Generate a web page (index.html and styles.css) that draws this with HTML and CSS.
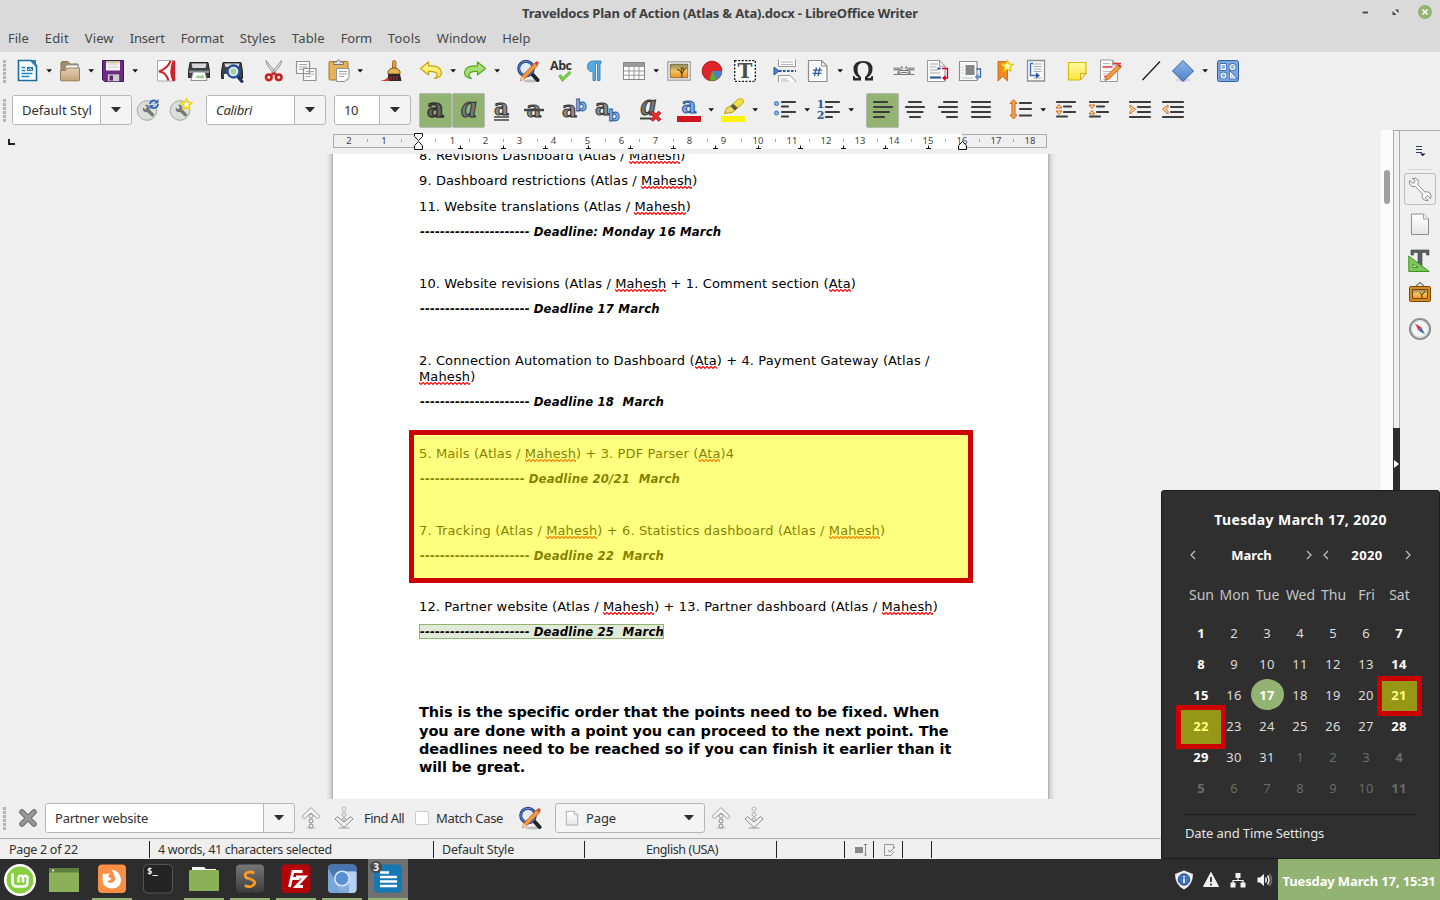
FILE: index.html
```html
<!DOCTYPE html>
<html lang="en">
<head>
<meta charset="utf-8">
<title>Traveldocs Plan of Action (Atlas &amp; Ata).docx - LibreOffice Writer</title>
<link rel="stylesheet" href="styles.css">
</head>
<body>
<svg class="defs" aria-hidden="true">
  <defs>
    <linearGradient id="gGrey" x1="0" y1="0" x2="0" y2="1"><stop offset="0" stop-color="#fff"/><stop offset="1" stop-color="#e6e6e6"/></linearGradient>
    <linearGradient id="gTan" x1="0" y1="0" x2="0" y2="1"><stop offset="0" stop-color="#e2d0b4"/><stop offset="1" stop-color="#c2a27c"/></linearGradient>
    <linearGradient id="gBlue" x1="0" y1="0" x2="0" y2="1"><stop offset="0" stop-color="#8db4e6"/><stop offset="1" stop-color="#4c82c8"/></linearGradient>
    <linearGradient id="gYel" x1="0" y1="0" x2="0" y2="1"><stop offset="0" stop-color="#fffba0"/><stop offset="1" stop-color="#fbe43c"/></linearGradient>
    <linearGradient id="gSun" x1="0" y1="0" x2="0" y2="1"><stop offset="0" stop-color="#8c8a66"/><stop offset=".5" stop-color="#f6c25c"/><stop offset="1" stop-color="#ee8f22"/></linearGradient>
    <linearGradient id="gDark" x1="0" y1="0" x2="0" y2="1"><stop offset="0" stop-color="#777"/><stop offset="1" stop-color="#3c3c3c"/></linearGradient>
  </defs>
  <symbol id="caret" viewBox="0 0 6 4"><path d="M.4 .3h5.600L3.200 3.600z" fill="#111"/></symbol>
  <symbol id="tri" viewBox="0 0 10 6"><path d="M0 0h10L6 4.600Q5 5.600 4 4.600z" fill="#2e2e2e"/></symbol>
  <symbol id="find" viewBox="0 0 24 24">
    <ellipse cx="15" cy="22" rx="8" ry="1.400" fill="#000" opacity=".2"/>
    <path d="M16 15l5.500 6" stroke="#222" stroke-width="4" stroke-linecap="round"/>
    <circle cx="10" cy="9.500" r="7.300" fill="#e3ebf7" stroke="#1e3f86" stroke-width="3"/><circle cx="10" cy="9.500" r="7.200" fill="none" stroke="#6f93d8" stroke-width="1"/>
    <path d="M4.500 21.500l1.200-4L18.500 4l3 2.600L8.500 20z" fill="#f59a3c" stroke="#b8571a" stroke-width=".8"/><path d="M18.500 4l1.600-1.600q2-.6 2.700 1.600L21.500 6.600z" fill="#e0403c"/><path d="M4.500 21.500l1.200-4 2.800 2.500z" fill="#f4d6a8"/>
  </symbol>
  <symbol id="up" viewBox="0 0 24 24"><ellipse cx="12" cy="22" rx="5" ry="1" fill="#000" opacity=".15"/><path d="M12 1.500L21 10.500l-2.400 2.200L12 7l-6.600 5.700L3 10.500z" fill="#f4f4f4" stroke="#9a9a9a" stroke-linejoin="round"/><circle cx="12" cy="10" r="2" fill="#eee" stroke="#999"/><circle cx="12" cy="15" r="2" fill="#eee" stroke="#888"/><circle cx="12" cy="20" r="2" fill="#eee" stroke="#888"/></symbol>
  <symbol id="down" viewBox="0 0 24 24"><ellipse cx="12" cy="22" rx="6" ry="1" fill="#000" opacity=".2"/><path d="M12 21.500L21 13l-2.400-2.400L12 16l-6.600-5.400L3 13z" fill="#f0f0f0" stroke="#8d8d8d" stroke-linejoin="round"/><circle cx="12" cy="3" r="2" fill="#eee" stroke="#bbb"/><circle cx="12" cy="8.500" r="2" fill="#eee" stroke="#aaa"/><circle cx="12" cy="13.500" r="1.700" fill="#eee" stroke="#999"/></symbol>
  <symbol id="page" viewBox="0 0 24 24"><path d="M3.500 2h12L20.500 7v15.500H3.500z" fill="url(#gGrey)" stroke="#8b8f8b" stroke-linejoin="round"/><path d="M15.500 2v5h5" fill="#eee" stroke="#8b8f8b" stroke-width=".8"/></symbol>
  <symbol id="wrench" viewBox="0 0 24 24"><circle cx="11" cy="12.500" r="9.800" fill="#dcdedc" stroke="#a5a7a5"/><path d="M7 9.500l2 2 2-2-2-2.500c3-.8 5 1.500 4 4l5.500 5.500-2 2.500L11 14c-3 .8-5-2-4-4.500z" fill="#777"/></symbol>
</svg>

<header class="top">
  <div class="title"><span class="t-title">Traveldocs Plan of Action (Atlas &amp; Ata).docx - LibreOffice Writer</span>
    <svg class="winctl" viewBox="0 0 78 20"><path d="M4.500 12.500h5.500" stroke="#444" stroke-width="1.800"/><path d="M34.500 11v4h4zM37 9.500h3.500v3.500z" fill="#444"/><circle cx="67" cy="12" r="7" fill="#92b372"/><path d="M64.500 9.500l5 5m0-5l-5 5" stroke="#fff" stroke-width="1.600"/></svg>
  </div>
  <nav class="menu"><span class="mn1">File</span><span class="mn2">Edit</span><span class="mn3">View</span><span class="mn4">Insert</span><span class="mn5">Format</span><span class="mn6">Styles</span><span class="mn7">Table</span><span class="mn8">Form</span><span class="mn9">Tools</span><span class="mn10">Window</span><span class="mn11">Help</span></nav>
</header>

<div class="bar bar1">
  <i class="grip"></i>
  <svg class="i" viewBox="0 0 24 24"><path d="M3.500 1.500h13l5 5v15h-18z" fill="#fff" stroke="#1b6a9c" stroke-width="1.600"/><path d="M14 1h7v7z" fill="#2b7fb0"/><path d="M6.500 8.500h4m-4 3h4m-4 3h11m-11 3h8" stroke="#1787c8" stroke-width="1.600"/><path d="M12 8h6v4h-6z" fill="#1c76aa"/><path d="M13 11l2-1.500 2 1.500" stroke="#fff" fill="none"/></svg>
  <svg class="a m7"><use href="#caret"/></svg>
  <svg class="i m6" viewBox="0 0 24 24"><path d="M3 21V4q0-1.500 1.500-1.500H10L12 5h8v6" fill="#a58c6c" stroke="#8a7050"/><path d="M8 6h12v8H8z" fill="#fafafa" stroke="#999"/><path d="M2.500 21V11.500h5L10 9h11.500v12q0 .8-.8.800H3.300q-.8 0-.8-.8z" fill="url(#gTan)" stroke="#9a7d58"/></svg>
  <svg class="a m6"><use href="#caret"/></svg>
  <svg class="i m7" viewBox="0 0 24 24"><path d="M1.500 1.500h21v21h-19l-2-2z" fill="#6d2d85" stroke="#44145a"/><path d="M5 2h14v9.500H5z" fill="#f6f6f6"/><path d="M7 5h10M7 8h10" stroke="#c8c8c8"/><path d="M5 2h14v2H5z" fill="#cc9"/><path d="M6.500 15h12v7.500h-12z" fill="#ccc" stroke="#54236b" stroke-width=".6"/><path d="M8.500 16.500h3.500v5H8.500z" fill="#5a2a70"/></svg>
  <svg class="a m7"><use href="#caret"/></svg>
  <svg class="i m16" viewBox="0 0 24 24"><path d="M3.500 1.500h17.500v20.500H3.500z" fill="#fdfdfd" stroke="#aaa"/><path d="M21 2v20h-2.500Q14 13 18.500 2z" fill="#c9252b"/><path d="M16.500 2Q14 9 5 12.500q7 .5 9.500 9" fill="none" stroke="#c9252b" stroke-width="2.200"/></svg>
  <svg class="i" viewBox="0 0 24 24"><path d="M3 3.500h18l1.500 9v6h-21v-6z" fill="#3d4242" stroke="#222"/><path d="M4.500 4.500h15L18.500 9h-13z" fill="#d8d8d8"/><path d="M2 11.500h20v2.500H2z" fill="#8a9090"/><path d="M6 13h12l2 8.500H4z" fill="#fff" stroke="#777" stroke-width=".8"/><path d="M8 19l3-3 2 1 3-1.500 1.500 4z" fill="#9fd08e"/></svg>
  <svg class="i" viewBox="0 0 24 24"><path d="M3 3.500h18l1.500 9v7h-21v-7z" fill="#3d4242" stroke="#222"/><path d="M4.500 4.500h15L18.500 8h-13z" fill="#d8d8d8"/><path d="M4 15h14v7H4z" fill="#f4f4f4"/><path d="M18 18l4 4.500" stroke="#1c2f62" stroke-width="3" stroke-linecap="round"/><circle cx="13.500" cy="12.500" r="6" fill="#dfeaf4" stroke="#29509c" stroke-width="2.400"/><circle cx="13.500" cy="12.500" r="3" fill="#a9cf9d"/></svg>
  <svg class="i m18" viewBox="0 0 24 24"><path d="M4 1.500q0 3 2.500 6.500L13 16l1.500-1.500zM19.500 1.500q0 3-2.500 6.500l-6.500 8L9 14.500z" fill="#e4e6e4" stroke="#888" stroke-width=".9"/><g fill="none" stroke="#cc1f22" stroke-width="2.600"><circle cx="6.800" cy="18.300" r="2.800"/><circle cx="16.700" cy="18.300" r="2.800"/></g><path d="M9.500 16l2.200-2 2.300 2" stroke="#cc1f22" stroke-width="2" fill="none"/></svg>
  <svg class="i m8" viewBox="0 0 24 24"><path d="M2.500 2.500h13v12h-13zM9.500 9.500h12.500v12h-12.500z" fill="#fafafa" stroke="#929292" stroke-width="1.200"/><path d="M5 5.500h8M5 8h8M5 10.500h4m3 2h8m-8 2.500h8m-8 2.500h5" stroke="#a5a5a5"/></svg>
  <svg class="i" viewBox="0 0 24 24"><rect x="2" y="2.500" width="19" height="18.500" rx="1.200" fill="#e6b35c" stroke="#a9742a"/><path d="M6.500 5.500V3h3q.5-2 2-2t2 2h3v2.500z" fill="#ddd" stroke="#777"/><path d="M9.500 9.500h12.500v9l-4 4H9.500z" fill="#fafafa" stroke="#929292"/><path d="M12 12.500h8m-8 2.500h8m-8 2.500h5" stroke="#a5a5a5"/></svg>
  <svg class="a m6"><use href="#caret"/></svg>
  <svg class="i m17" viewBox="0 0 24 24"><path d="M.5 22q5.500-1 8-4.500L17 19l-1 3z" fill="#e0342f"/><path d="M12.500 9V3.500q0-2 1.700-2t1.700 2V9z" fill="#e3a04c" stroke="#a76a20"/><path d="M8 12q2-3 6-3t6 3v3H8z" fill="#e5b254" stroke="#8a6118"/><path d="M8 15h12l1.500 7H10q-2.500-3-2-7z" fill="#2d2828"/><path d="M11 17v4m3-4v4m3-4v4" stroke="#b0302c"/></svg>
  <svg class="i m15" viewBox="0 0 24 24"><path d="M1.500 9.500L9.500 3v4q12-1 13 6.500 0 5-7 6 3-2 2.500-4Q17.500 12 9.500 12.500V16z" fill="url(#gYel)" stroke="#c9a010" stroke-width="1.200" stroke-linejoin="round"/></svg>
  <svg class="a m7"><use href="#caret"/></svg>
  <svg class="i m7" viewBox="0 0 24 24"><path d="M22.500 9.500L14.500 3v4q-12-1-13 6.500 0 5 7 6-3-2-2.500-4Q6.500 12 14.500 12.500V16z" fill="#a8e078" stroke="#55a81c" stroke-width="1.200" stroke-linejoin="round"/></svg>
  <svg class="a m7"><use href="#caret"/></svg>
  <svg class="i m16"><use href="#find"/></svg>
  <svg class="i" viewBox="0 0 24 24"><text class="abc" x="1" y="11" textLength="22">Abc</text><path d="M10.500 16l3 4.500L21.500 13" fill="none" stroke="#4ea82a" stroke-width="3"/><path d="M10.500 16l3 4.500L21.500 13" fill="none" stroke="#8ed95c" stroke-width="1.300"/></svg>
  <svg class="i" viewBox="0 0 24 24"><path d="M19 2H11q-5.500.3-5.500 5.500t5.500 5.500v8.500h2.500V4.500h2v17H18V4.500h1z" fill="#58a9e0" stroke="#2c79b5" stroke-width=".8"/></svg>
  <svg class="i m16" viewBox="0 0 24 24"><path d="M1.500 3.500h21v17h-21z" fill="#fff" stroke="#858585"/><path d="M2 4h20v3.500H2z" fill="#9a9a9a"/><path d="M2 7.500h20M2 12h20M2 16.200h20M7 4v16M12 4v16M17 4v16" stroke="#999"/></svg>
  <svg class="a m7"><use href="#caret"/></svg>
  <svg class="i m8" viewBox="0 0 24 24"><path d="M.8 2.800h22.400v18.400H.8z" fill="#fff" stroke="#999" stroke-width="1.200"/><path d="M3.200 5.200h17.600v13.600H3.200z" fill="url(#gSun)" stroke="#6b5530" stroke-width=".8"/><path d="M15 18.500q.5-4-2.500-7.500m2.300 3.500q0-3.500-.8-6m1.200 6q1-3 4-6m-2.700 3.300l-.8-3.800M12.500 11l-2.500-.5" stroke="#35220e" stroke-width=".9" fill="none"/></svg>
  <svg class="i" viewBox="0 0 24 24"><circle cx="12" cy="12" r="9.800" fill="#e0262b" stroke="#a81418"/><path d="M12 12h9.800a9.800 9.800 0 0 1-5 8.500z" fill="#4c82c8"/><path d="M12 12l4.800 8.500a9.800 9.800 0 0 1-7.300 1z" fill="#58b02c"/></svg>
  <svg class="i" viewBox="0 0 24 24"><rect x="1.700" y="1.700" width="20.600" height="20.600" fill="#fff" stroke="#111" stroke-width="1.300" stroke-dasharray="2 1.500"/><text class="bigT" x="12" y="18.500">T</text></svg>
  <svg class="i m16" viewBox="0 0 24 24"><path d="M5.500.5v7h17V.5M5.500 23v-6.500H17l5.500 5.500v1" fill="#fafafa" stroke="#999"/><path d="M8 3h12M8 5.500h12M8 20h6m-6 2h8" stroke="#b5b5b5"/><path d="M6 12h17" stroke="#2a5699" stroke-width="1.800" stroke-dasharray="2.500 1.500"/><path d="M1 8v8l5-4z" fill="#4c82c8" stroke="#2a5699"/></svg>
  <svg class="i" viewBox="0 0 24 24"><path d="M2.500 1.500h13l5.500 5.500v15.500H2.500z" fill="#fafafa" stroke="#8d8d8d" stroke-width="1.200"/><path d="M15.500 1.500V7H21" fill="none" stroke="#8d8d8d"/><path d="M10.500 8.500l-2 8.500m5.500-8.500l-2 8.500M7 11.200h9M6.500 14.400h9" stroke="#2f5fa8" stroke-width="1.300"/></svg>
  <svg class="a m7"><use href="#caret"/></svg>
  <svg class="i m8" viewBox="0 0 24 24"><path d="M2 21.500V17h1.500l.8 2H8Q2.500 15.500 2.500 10 2.500 2.200 12 2t9.500 8q0 5.500-5.500 9h3.700l.8-2H22v4.500h-8V18q3.500-2.500 3.500-8 0-6-5.500-6.200Q6.500 4 6.500 10q0 5.500 3.500 8v3.500z" fill="#262b2b"/></svg>
  <svg class="i m17" viewBox="0 0 24 24"><g fill="none" stroke="#767979" stroke-width="1.200"><path d="M1.500 9h4q3 0 4 2.500h-2Q6.500 10.500 5 10.700H1.500M1.500 15.500h4l3-2M22.500 9h-4q-3 0-4 2.500h2q1-.8 2.500-.8h3.500M22.500 15.500h-4l-3-2"/><path d="M6 13.500q0-2 3-2h6q3 0 3 2T15 15.500H9q-3 0-3-2zM9 13.500h6M9 7.500l2 2m4-2l-2 2"/></g></svg>
  <svg class="i" viewBox="0 0 24 24"><path d="M2.500 1.500h12l5.500 5.500v15.500H2.500z" fill="#fafafa" stroke="#999"/><path d="M14.500 1.500V7H20" fill="none" stroke="#999"/><path d="M5 5h8M5 8h6M5 11h8M5 14h10" stroke="#a9a9a9"/><path d="M5 18.500h11M12.500 9.500h3" stroke="#224f93" stroke-width="1.800"/><path d="M17 9.500h5.500v9.500H18" fill="none" stroke="#d02" stroke-width="1.300"/><path d="M17 19l3.500-3v6z" fill="#d02"/></svg>
  <svg class="i" viewBox="0 0 24 24"><path d="M1.500 2.500h17.500v19H1.500z" fill="#fafafa" stroke="#8d9090" stroke-width="1.200"/><path d="M7.500 6h9v10h-9z" fill="#838883"/><path d="M3.500 8h2m-2 3h2m-2 3h2M4 19h11" stroke="#bbb"/><path d="M18.500 10h4v8H19" fill="none" stroke="#3a6cb5" stroke-width="1.300"/><path d="M16.500 18l4-3v6z" fill="#5b8ad0"/></svg>
  <svg class="i m11" viewBox="0 0 24 24"><path d="M5 2.500h9.500V22L9.700 17.500 5 22z" fill="#f28a24" stroke="#c0600f" stroke-width=".8"/><path d="M14.500 1.500l1.700 3.400 3.800.6-2.800 2.700.7 3.800-3.400-1.800-3.400 1.800.7-3.800L9 5.500l3.800-.6z" fill="#fff7b0" stroke="#e8c90c" stroke-width="1.300"/></svg>
  <svg class="i m7" viewBox="0 0 24 24"><path d="M3.500 1.500h17v20.500h-17z" fill="#fafafa" stroke="#8d9090" stroke-width="1.300"/><path d="M9.500 5h8m-8 2.500h8m-8 2.500h8m-8 2.500h8M9.500 19h8" stroke="#a9a9a9"/><path d="M9 4.500H6.500v12H13" fill="none" stroke="#3a6cb5" stroke-width="1.400"/><path d="M16 16.500l-4-3v6z" fill="#2a5699"/></svg>
  <svg class="i m17" viewBox="0 0 24 24"><path d="M3.500 3.500h17.500v11l-6 6.500H3.500z" fill="url(#gYel)" stroke="#d8bb10" stroke-width="1.200"/><path d="M21 14.500h-5.500V21z" fill="#fff9a8" stroke="#c8aa10"/></svg>
  <svg class="i" viewBox="0 0 24 24"><path d="M2.500 1h12l5 5v16.500h-17z" fill="#fafafa" stroke="#999"/><path d="M14.500 1v5h5" fill="none" stroke="#999"/><path d="M5 4.500h7M5 12.500h9M5 15h6M5 20h5" stroke="#bbb"/><path d="M4.500 8h10M6 17.500h6M15 4.500h8" stroke="#e83038" stroke-width="1.300"/><path d="M7 21.500l1.300-4L19.500 6l3 2.800L11 20z" fill="#f59a3c" stroke="#b8571a" stroke-width=".8"/><path d="M19.500 6l1.300-1.300 3 2.600-1.300 1.500z" fill="#d33"/></svg>
  <svg class="i m17" viewBox="0 0 24 24"><path d="M3.500 21L21 2.500" stroke="#1b1b1b" stroke-width="1.300"/></svg>
  <svg class="i m8" viewBox="0 0 24 24"><ellipse cx="12" cy="21" rx="8" ry="1.800" fill="#000" opacity=".1"/><path d="M12 1.500L22.500 12 12 22.500 1.500 12z" fill="url(#gBlue)" stroke="#2f5fa8"/></svg>
  <svg class="a m7"><use href="#caret"/></svg>
  <svg class="i m8" viewBox="0 0 24 24"><rect x="1.500" y="1.500" width="21" height="21" rx="2" fill="#7ba5dc" stroke="#2f5fa8"/><g fill="none" stroke="#2f5fa8" stroke-width="2.600"><path d="M5 5.500h4.500v5H5zM14.500 14l4.500 5h-4.500z"/><circle cx="16.500" cy="8" r="2.500"/><circle cx="7.500" cy="16.500" r="2.500"/></g><g fill="#8fb5e6" stroke="#fff" stroke-width="1.200"><path d="M5 5.500h4.500v5H5zM14.500 14l4.500 5h-4.500z"/><circle cx="16.500" cy="8" r="2.500"/><circle cx="7.500" cy="16.500" r="2.500"/></g></svg>
</div>

<div class="bar bar2">
  <i class="grip"></i>
  <div class="combo c120 m6"><span class="val"><span>Default Styl</span></span><span class="btn"><svg class="t"><use href="#tri"/></svg></span></div>
  <svg class="i m4" viewBox="0 0 24 24"><use href="#wrench"/><path d="M14 6q.5-3.500 4-3.500 1.500 0 2.500 1.200M22 6q-.5 4-4 4-1.800 0-2.800-1.200" fill="none" stroke="#3469b4" stroke-width="2"/><path d="M22.500 1v4.500H18zM13.500 11.500V7H18z" fill="#3469b4"/></svg>
  <svg class="i" viewBox="0 0 24 24"><use href="#wrench"/><path d="M17.500 1l1.500 3.300 3.600.5-2.600 2.500.6 3.700-3.100-1.700-3.200 1.700.6-3.700-2.600-2.500 3.600-.5z" fill="#fffbd0" stroke="#f0d40c" stroke-width="1.600"/></svg>
  <div class="combo c120 m13"><span class="val"><span class="v2">Calibri</span></span><span class="btn"><svg class="t"><use href="#tri"/></svg></span></div>
  <div class="combo c77 m8"><span class="val"><span class="v3">10</span></span><span class="btn"><svg class="t"><use href="#tri"/></svg></span></div>
  <span class="tog m8"><svg class="i" viewBox="0 0 24 24"><text class="ch heavy" x="11.500" y="19">a</text></svg></span>
  <span class="tog"><svg class="i" viewBox="0 0 24 24"><text class="ch ital" x="12" y="19">a</text></svg></span>
  <svg class="i m5" viewBox="0 0 24 24"><text class="ch" x="11.500" y="17">a</text><path d="M4 19h15M4 22h15" stroke="#444" stroke-width="1.500"/></svg>
  <svg class="i m8" viewBox="0 0 24 24"><text class="ch" x="12" y="18.500">a</text><path d="M2 12h20" stroke="#444" stroke-width="2.400"/></svg>
  <svg class="i m16" viewBox="0 0 24 24"><text class="ch" x="7.500" y="19">a</text><text class="sb" x="19" y="12.500">b</text></svg>
  <svg class="i" viewBox="0 0 24 24"><text class="ch" x="7.500" y="17">a</text><text class="sb" x="19" y="22.500">b</text></svg>
  <svg class="i m19" viewBox="0 0 24 24"><text class="ch ital" x="10.500" y="17">a</text><path d="M2 20.500h11" stroke="#444" stroke-width="2"/><path d="M13.500 14l8.500 8.500m0-8.500l-8.500 8.500" stroke="#a11" stroke-width="3.800"/><path d="M14 14.500l7.500 7.500m0-7.500L14 22" stroke="#f03030" stroke-width="2.200"/></svg>
  <svg class="i m15" viewBox="0 0 24 24"><text class="ch bl" x="12" y="14.500">a</text><path d="M0 18h24v6H0z" fill="#d0161c"/></svg>
  <svg class="a m7"><use href="#caret"/></svg>
  <svg class="i m7" viewBox="0 0 24 24"><path d="M3.500 15.500l2-5.500 4-2 4.500 4-3 2.500z" fill="#eedc62" stroke="#b59a10"/><path d="M9.500 8l2.500-2.500 5 4.500-3 2.500z" fill="#555"/><path d="M12 5.500L17.500 1q5-1 5.500 3L17 10z" fill="#f4e040" stroke="#c4a910"/><path d="M0 18h24v6H0z" fill="#fdf200"/></svg>
  <svg class="a m7"><use href="#caret"/></svg>
  <svg class="i m15" viewBox="0 0 24 24"><g class="ln"><path d="M9 4h13M9 8.500h6M9 14h13M9 18.500h6"/></g><circle cx="3.500" cy="5.500" r="2" fill="#8db4e6" stroke="#3a6cb5"/><circle cx="3.500" cy="15" r="2" fill="#8db4e6" stroke="#3a6cb5"/></svg>
  <svg class="a m7"><use href="#caret"/></svg>
  <svg class="i m7" viewBox="0 0 24 24"><g class="ln"><path d="M9 4h13M9 9h6M9 14h13M9 19h6"/></g><text class="num" x="3.500" y="10">1</text><text class="num" x="3.500" y="21">2</text></svg>
  <svg class="a m7"><use href="#caret"/></svg>
  <span class="tog m12"><svg class="i" viewBox="0 0 24 24"><g class="ln"><path d="M3 4h13M3 9h18M3 14h15M3 19h10"/></g></svg></span>
  <svg class="i m4" viewBox="0 0 24 24"><g class="ln"><path d="M6 4h12M3 9h18M4.500 14h15M7 19h10"/></g></svg>
  <svg class="i" viewBox="0 0 24 24"><g class="ln"><path d="M8 4h13M3 9h18M6 14h15M11 19h10"/></g></svg>
  <svg class="i" viewBox="0 0 24 24"><g class="ln"><path d="M3 4h18M3 9h18M3 14h18M3 19h18"/></g></svg>
  <svg class="i m16" viewBox="0 0 24 24"><g class="ln"><path d="M11 5h11M11 11h11M11 17.500h11"/></g><path d="M4.500 1.500l3.500 4H6V17h2l-3.500 4-3.500-4h2V5.500H1z" fill="#f3a654" stroke="#c8661a"/></svg>
  <svg class="a m7"><use href="#caret"/></svg>
  <svg class="i m8" viewBox="0 0 24 24"><g class="ln"><path d="M3 4h18M10 8.500h7M10 14h11M3 18.500h10"/></g><path d="M5 6.500l3 3.500H2zM5 16.500L2 13h6z" fill="#fbd9b0" stroke="#d06a1c"/></svg>
  <svg class="i" viewBox="0 0 24 24"><g class="ln"><path d="M3 4h18M10 8.500h7M10 14h11M3 18.500h10"/></g><path d="M5 10.500L2 7h6zM5 12.500l3 3.500H2z" fill="#fbd9b0" stroke="#d06a1c"/></svg>
  <svg class="i m17" viewBox="0 0 24 24"><g class="ln"><path d="M2 4h20M10 9h12M10 14h12M2 19h20"/></g><path d="M2 7l5.500 4.300L2 16v-2.500l2-2.200-2-2z" fill="#fbd9b0" stroke="#d06a1c"/></svg>
  <svg class="i" viewBox="0 0 24 24"><g class="ln"><path d="M2 4h20M10 9h12M10 14h12M2 19h20"/></g><path d="M7 7l-5.500 4.300L7 16v-2.500l-2-2.200 2-2z" fill="#fbd9b0" stroke="#d06a1c"/></svg>
</div>

<main class="work">
  <section class="editor">
    <div class="rulerrow">
      <svg class="corner" viewBox="0 0 8 7"><path d="M1 0v5h6" stroke="#222" stroke-width="2" fill="none"/></svg>
      <svg class="ruler" viewBox="333 130 716 24">
        <path d="M418 134.500H333.500v13H418M962 134.500h84.500v13H962" fill="none" stroke="#aaa"/>
        <path d="M418 134h544v14.500H418z" fill="#fff"/>
        <path d="M367.500 139v3M401.500 139v3M435.500 139v3M469.500 139v3M503.500 139v3M537.500 139v3M571.500 139v3M605.500 139v3M639.500 139v3M673.500 139v3M707.500 139v3M741.500 139v3M775.500 139v3M809.500 139v3M843.500 139v3M877.500 139v3M911.500 139v3M945.500 139v3M979.500 139v3M1013.500 139v3" stroke="#aaa"/>
        <g class="rn"><text x="349">2</text><text x="384">1</text><text x="452.500">1</text><text x="485.500">2</text><text x="519.500">3</text><text x="553.500">4</text><text x="587.500">5</text><text x="621.500">6</text><text x="655.500">7</text><text x="689.500">8</text><text x="723.500">9</text><text x="758">10</text><text x="792">11</text><text x="826">12</text><text x="860">13</text><text x="894">14</text><text x="928">15</text><text x="962">16</text><text x="996">17</text><text x="1030">18</text></g>
        <path d="M458 148.500h5m-2.500-3v3M501 148.500h5m-2.500-3v3M543 148.500h5m-2.500-3v3M586 148.500h5m-2.500-3v3M628 148.500h5m-2.500-3v3M671 148.500h5m-2.500-3v3M713 148.500h5m-2.500-3v3M756 148.500h5m-2.500-3v3M798 148.500h5m-2.500-3v3M841 148.500h5m-2.500-3v3M883 148.500h5m-2.500-3v3M926 148.500h5m-2.500-3v3" stroke="#111"/>
        <path d="M414.500 133.500h8v3l-4 4-4-4zM414.500 149.500h8v-4l-4-4-4 4zM958.500 149.500h8v-4l-4-4-4 4z" fill="#f6f6f6" stroke="#111"/>
      </svg>
    </div>
    <div class="canvas">
      <article class="page">
        <p><span>8. Revisions Dashboard (Atlas / <u>Mahesh</u>)</span></p>
        <p><span>9. Dashboard restrictions (Atlas / <u>Mahesh</u>)</span></p>
        <p><span>11. Website translations (Atlas / <u>Mahesh</u>)</span></p>
        <p class="dl"><span class="dash">----------------------</span><span>Deadline: Monday 16 March</span></p>
        <p></p>
        <p><span>10. Website revisions (Atlas / <u>Mahesh</u> + 1. Comment section (<u>Ata</u>)</span></p>
        <p class="dl"><span class="dash">----------------------</span><span>Deadline 17 March</span></p>
        <p></p>
        <p class="two"><span>2. Connection Automation to Dashboard (<u>Ata</u>) + 4. Payment Gateway (Atlas /</span><br><span><u>Mahesh</u>)</span></p>
        <p class="dl"><span class="dash">----------------------</span><span>Deadline 18&nbsp; March</span></p>
        <p></p>
        <p><span>5. Mails (Atlas / <u>Mahesh</u>) + 3. PDF Parser (<u>Ata</u>)4</span></p>
        <p class="dl"><span class="dash">---------------------</span><span>Deadline 20/21&nbsp; March</span></p>
        <p></p>
        <p><span>7. Tracking (Atlas / <u>Mahesh</u>) + 6. Statistics dashboard (Atlas / <u>Mahesh</u>)</span></p>
        <p class="dl"><span class="dash">----------------------</span><span>Deadline 22&nbsp; March</span></p>
        <p></p>
        <p><span>12. Partner website (Atlas / <u>Mahesh</u>) + 13. Partner dashboard (Atlas / <u>Mahesh</u>)</span></p>
        <p class="dl last"><span class="sel"><span class="dash">----------------------</span><span>Deadline 25&nbsp; March</span></span></p>
        <h2><span>This is the specific order that the points need to be fixed. When</span><br><span>you are done with a point you can proceed to the next point. The</span><br><span>deadlines need to be reached so if you can finish it earlier than it</span><br><span class="h4">will be great.</span></h2>
      </article>
    </div>
    <div class="mark markdoc"></div>
  </section>
  <div class="scroll"><i></i></div>
  <div class="split"><span><svg viewBox="0 0 5 8"><path d="M0 0l5 4-5 4z" fill="#fff"/></svg></span></div>
  <aside class="side">
    <svg class="i s1" viewBox="0 0 24 24"><path d="M8 6.500h6M8 9.500h6M8 12.500h6" stroke="#2b3f63" stroke-width="1.200"/><path d="M12 13.500h5.500l-2.700 2.700z" fill="#14203c"/></svg>
    <hr>
    <span class="sbtn"><svg class="i" viewBox="0 0 24 24"><path d="M2 3.500l3 3 2.300-2L4.500 1.500q3.500-1 5.500 1.500 1 2-.2 4.500l7 7.500q3-1 5 1t.7 5.500l-3-3-2.300 2.300 3 2.700q-3.500.5-5.200-1.500T14.500 17l-7-7.500q-3 .8-5-1.200T2 3.500z" fill="#fafafa" stroke="#8a8a8a"/></svg></span>
    <svg class="i s2"><use href="#page"/></svg>
    <svg class="i s3" viewBox="0 0 24 24"><path d="M3 1h18v5h-2.500V3.500H14v17h-4v-17H5.500V6H3z" fill="#5b6164" stroke="#3a3f42" stroke-width=".6"/><path d="M.800 7v15.500h20.500z" fill="#7cc85a" stroke="#3f9420"/><path d="M5 15v3.500h5z" fill="#efefef" stroke="#3f9420"/></svg>
    <svg class="i s4" viewBox="0 0 24 24"><path d="M8 5l4-3.500L16 5" fill="none" stroke="#777" stroke-width="1.300"/><rect x="1.500" y="5.500" width="21" height="15" rx="1" fill="#d58b22" stroke="#7a4a08"/><path d="M4.500 8.500h15v9h-15z" fill="url(#gSun)" stroke="#7a4a08"/><path d="M14 17q0-4-2-5.500m2 2.500l3-4" stroke="#35220e" stroke-width=".9" fill="none"/></svg>
    <svg class="i s5" viewBox="0 0 24 24"><circle cx="12" cy="12" r="10" fill="#f7f7f7" stroke="#8e928e" stroke-width="2.200"/><circle cx="12" cy="12" r="8" fill="none" stroke="#ddd"/><path d="M7 6.500l6.500 4-3 3z" fill="#d8343a"/><path d="M17 17.500l-6.500-4 3-3z" fill="#3d6fb8"/></svg>
  </aside>
</main>

<div class="findbar">
  <i class="grip"></i>
  <svg class="i m10" viewBox="0 0 24 24"><path d="M6 6l12 12m0-12L6 18" stroke="#6d6d6d" stroke-width="5.500" stroke-linecap="round"/><path d="M6 6l12 12m0-12L6 18" stroke="#999" stroke-width="3.500" stroke-linecap="round"/></svg>
  <div class="combo c250 m5"><span class="val"><span class="f1">Partner website</span></span><span class="btn"><svg class="t"><use href="#tri"/></svg></span></div>
  <svg class="i m4"><use href="#up"/></svg>
  <svg class="i"><use href="#down"/></svg>
  <span class="f2">Find All</span>
  <i class="check"></i>
  <span class="f3">Match Case</span>
  <svg class="i m15"><use href="#find"/></svg>
  <div class="combo c150"><svg class="pg"><use href="#page"/></svg><span class="f4">Page</span><svg class="t"><use href="#tri"/></svg></div>
  <svg class="i m4"><use href="#up"/></svg>
  <svg class="i"><use href="#down"/></svg>
</div>

<footer class="status">
  <span class="w150"><span class="s-1">Page 2 of 22</span></span><span class="w284"><span class="s-2">4 words, 41 characters selected</span></span><span class="w151"><span class="s-3">Default Style</span></span><span class="w192"><span class="s-4">English (USA)</span></span><span class="w68"></span><span class="w29"><svg viewBox="0 0 14 12"><path d="M1 3h8v6H1z" fill="#888"/><path d="M10 .5h3M10 11h3M11.500 1v10" stroke="#888"/></svg></span><span class="w29"><svg viewBox="0 0 14 12"><path d="M10.500 4V.5H1.500v11H8l2.500-3V7.500" fill="none" stroke="#999"/><path d="M5 6l2 2 5-5" fill="none" stroke="#888"/></svg></span><span class="w29"></span>
</footer>

<div class="panel">
  <span class="app"><svg viewBox="0 0 40 40"><circle cx="20" cy="21" r="16" fill="#fff"/><circle cx="20" cy="21" r="13.500" fill="#87cf3e"/><path d="M12.500 14.500V23q0 4.500 4.500 4.500h6.500q4 0 4-4V19q0-2.200-2.300-2.200T23 19v4.500M23 19q0-2.200-2.300-2.200T18.500 19v4.500" fill="none" stroke="#fff" stroke-width="2.600"/></svg></span>
  <span class="app a2"><svg viewBox="0 0 40 40"><path d="M5 9h30v24H5z" fill="#8ab158"/><path d="M5 9h30v4.500H5z" fill="#5f7f40"/><circle cx="9" cy="11.500" r="1" fill="#fff"/></svg></span>
  <span class="app run a3"><svg viewBox="0 0 40 40"><rect x="6" y="5.500" width="28" height="28.500" rx="4" fill="#f98e45"/><path d="M11 14q1.500 0 2 1.500 2-1.500 5-1l-2 2.500q1 2 3.500 2-1.500 3-4.500 3 3.500 3.500 7 .5 2.500-3-.5-7.500 0-2-2-4 8 0 9.500 9 .5 9-9 9.500-9-.5-9.500-8.500 0-4.500 .5-7z" fill="#fff"/></svg></span>
  <span class="app"><svg viewBox="0 0 40 40"><rect x="5.500" y="5.500" width="29" height="28.500" rx="4" fill="#242424" stroke="#555"/><text class="term" x="9" y="15">$_</text></svg></span>
  <span class="app run"><svg viewBox="0 0 40 40"><path d="M8 8h12l2 2h10v4H8z" fill="#f4f4f4"/><path d="M5 12q0-1 1-1h28q1 0 1 1v19q0 1-1 1H6q-1 0-1-1z" fill="#8ab158"/></svg></span>
  <span class="app run"><svg viewBox="0 0 40 40"><rect x="6" y="5.500" width="28" height="28" rx="4" fill="url(#gDark)"/><path d="M24.500 14q-3.500-1.500-6.500-.7t-2.700 3.200 3.200 3 5.300 2.500-1 4.500-8-.2" fill="none" stroke="#fb9a24" stroke-width="2.800"/></svg></span>
  <span class="app run"><svg viewBox="0 0 40 40"><rect x="5.500" y="5.500" width="29" height="28.500" rx="4" fill="#b50408"/><path d="M13.500 28l3.500-15.500h9.500M15.500 19.500h8M20 18h9l-9 9.500h7" fill="none" stroke="#fff" stroke-width="2.800"/></svg></span>
  <span class="app run"><svg viewBox="0 0 40 40"><rect x="6" y="5.500" width="28.500" height="28.500" rx="4" fill="#84aede"/><path d="M6 11l8 11 2 8 4 4H10q-4 0-4-4z" fill="#78a5da"/><path d="M20 12h14.500V9.500q0-4-4-4H10q-4 0-4 4L12 19z" fill="#4976ae"/><path d="M27 20v14h3.500q4 0 4-4V13H22z" fill="#b5d0f0"/><circle cx="20" cy="19.500" r="8" fill="#d6e6f8"/><circle cx="20" cy="19.500" r="6.400" fill="#5a8fd4"/></svg></span>
  <span class="app run on"><svg viewBox="0 0 40 40"><rect x="6" y="5.500" width="28" height="28" rx="4" fill="#1678b4"/><path d="M12 13.500h9m-9 4.500h17M12 22.500h17M12 27h17" stroke="#fff" stroke-width="2.300"/><circle cx="8" cy="8" r="6" fill="#4a4a4a"/><text class="bdg" x="8" y="11.500">3</text></svg></span>
  <div class="tray">
    <svg viewBox="0 0 20 20"><path d="M10 .5L19 4q0 11-9 15.500Q1 15 1 4z" fill="#eee"/><circle cx="10" cy="9.500" r="5.700" fill="#3f74bd" stroke="#1f4a8a"/><path d="M10 8.500v4.500M10 6v1.500" stroke="#fff" stroke-width="1.600"/></svg>
    <svg viewBox="0 0 20 20"><path d="M10 2.500L17.500 16.500h-15z" fill="#f2f2f2" stroke="#f2f2f2" stroke-linejoin="round"/><path d="M10 7v5m0 1.500v2" stroke="#2d2d2d" stroke-width="1.800"/></svg>
    <svg viewBox="0 0 20 20"><path d="M7.500 3h5v5h-5zM2.500 12.500h5v5h-5zM12.500 12.500h5v5h-5z" fill="#f2f2f2"/><path d="M10 8v2.500M5 13v-2.500h10V13" fill="none" stroke="#f2f2f2" stroke-width="1.200"/></svg>
    <svg viewBox="0 0 20 20"><path d="M2.500 7.500H5L9 4v12L5 12.500H2.500z" fill="#f2f2f2"/><path d="M10.500 7.500q1.500 2.500 0 5M12.500 5.500q3 4.500 0 9" fill="none" stroke="#f2f2f2" stroke-width="1.500"/><path d="M14.500 4q4 6 0 12" fill="none" stroke="#777" stroke-width="1.500"/></svg>
  </div>
  <div class="clock"><span class="ck">Tuesday March 17, 15:31</span></div>
</div>

<section class="cal">
  <h3><span class="ca">Tuesday March 17, 2020</span></h3>
  <div class="nav">
    <svg viewBox="0 0 6 8"><path d="M5 0L1 4l4 4"/></svg><b class="n1"><span class="cm">March</span></b><svg viewBox="0 0 6 8"><path d="M1 0l4 4-4 4"/></svg>
    <svg class="n2" viewBox="0 0 6 8"><path d="M5 0L1 4l4 4"/></svg><b class="n3"><span class="cy">2020</span></b><svg viewBox="0 0 6 8"><path d="M1 0l4 4-4 4"/></svg>
  </div>
  <div class="grid wk"><span>Sun</span><span>Mon</span><span>Tue</span><span>Wed</span><span>Thu</span><span>Fri</span><span>Sat</span></div>
  <div class="grid days">
    <b>1</b><span>2</span><span>3</span><span>4</span><span>5</span><span>6</span><b>7</b>
    <b>8</b><span>9</span><span>10</span><span>11</span><span>12</span><span>13</span><b>14</b>
    <b>15</b><span>16</span><b class="today">17</b><span>18</span><span>19</span><span>20</span><b>21</b>
    <b>22</b><span>23</span><span>24</span><span>25</span><span>26</span><span>27</span><b>28</b>
    <b>29</b><span>30</span><span>31</span><span class="off">1</span><span class="off">2</span><span class="off">3</span><b class="off">4</b>
    <b class="off">5</b><span class="off">6</span><span class="off">7</span><span class="off">8</span><span class="off">9</span><span class="off">10</span><b class="off">11</b>
  </div>
  <hr>
  <div class="set"><span class="cs">Date and Time Settings</span></div>
  <div class="mark m21"></div>
  <div class="mark m22"></div>
</section>
</body>
</html>
```
FILE: styles.css
```css
* { box-sizing: border-box; }
html, body { margin: 0; height: 100%; }
body {
  width: 1440px; height: 900px; overflow: hidden; position: relative;
  display: flex; flex-direction: column;
  background: #efefef; color: #303030;
  font: 13px/16px "Noto Sans", "Open Sans", sans-serif;
}
.defs { position: absolute; width: 0; height: 0; }
svg { display: block; flex: none; }
span { white-space: nowrap; }

/* window title and menu */
.top { height: 52px; background: #dadada; flex: none; }
.title { height: 26px; display: flex; justify-content: center; align-items: center; font-weight: 700; color: #404040; position: relative; }
.t-title { letter-spacing: -.174px; }
.winctl { position: absolute; right: 4px; top: 0; width: 78px; height: 20px; }
.menu { display: flex; padding: 4px 0 0 8px; gap: 16px; color: #474747; }
.mn2, .mn7 { letter-spacing: .17px; }
.mn3, .mn6 { letter-spacing: .12px; }
.mn4, .mn5 { letter-spacing: -.18px; }
.mn8 { letter-spacing: -.28px; }
.mn9 { letter-spacing: .27px; }

/* toolbars */
.bar { display: flex; align-items: center; flex: none; }
.bar1 { height: 38px; }
.bar2 { height: 40px; }
.grip { width: 3px; height: 23px; margin-left: 3px; flex: none; background: repeating-linear-gradient(#b4b4b4 0 3px, transparent 3px 4px); }
.i { width: 24px; height: 24px; margin-left: 9px; overflow: visible; }
.a { width: 6px; height: 4px; }
.m4 { margin-left: 4px; } .m5 { margin-left: 5px; } .m6 { margin-left: 6px; } .m7 { margin-left: 7px; }
.m8 { margin-left: 8px; } .m10 { margin-left: 10px; } .m11 { margin-left: 11px; } .m12 { margin-left: 12px; }
.m13 { margin-left: 13px; } .m15 { margin-left: 15px; } .m16 { margin-left: 16px; } .m17 { margin-left: 17px; }
.m18 { margin-left: 18px; } .m19 { margin-left: 19px; }

.combo { display: flex; height: 30px; border: 1px solid #b6b6b6; border-radius: 3px; background: #f4f4f4; overflow: hidden; flex: none; align-items: center; }
.combo .val { flex: 1; height: 28px; background: #fff; padding: 6px 0 0 9px; }
.combo .btn { width: 31px; height: 28px; border-left: 1px solid #b6b6b6; display: flex; align-items: center; justify-content: center; }
.t { width: 10px; height: 6px; }
.c120 { width: 120px; } .c77 { width: 77px; } .c250 { width: 250px; }
.c150 { width: 150px; margin-left: 13px; padding: 0 10px 0 8px; }
.c150 .t { margin-left: auto; }
.pg { width: 16px; height: 18px; margin-right: 6px; }
.v2 { font-style: italic; letter-spacing: -.25px; }
.v3 { letter-spacing: -.4px; }

.tog { width: 33px; height: 35px; background: #92b372; border: 1px solid #b4b8b0; border-radius: 2px; display: flex; align-items: center; justify-content: center; flex: none; }
.tog .i { margin: 0; }
.ch { font: 700 23px "DejaVu Serif", serif; text-anchor: middle; fill: #8b8d8b; stroke: #333; stroke-width: 1px; }
.heavy { font-size: 26px; fill: #666; stroke-width: 1.500px; }
.ital { font: italic 700 31px "Liberation Serif", serif; fill: #777; }
.bl { fill: #7fa9e0; stroke: #2a5699; }
.sb { font: 700 16px "DejaVu Sans", sans-serif; text-anchor: middle; fill: #8db4e6; stroke: #2a5699; stroke-width: .9px; }
.num { font: 700 11px "DejaVu Serif", serif; text-anchor: middle; fill: #2a5699; }
.ln { stroke: #3c3c3c; stroke-width: 2.200px; stroke-linecap: round; }
.abc { font: 700 12.500px "Open Sans", sans-serif; fill: #333; }
.bigT { font: 700 20px "DejaVu Serif", serif; text-anchor: middle; fill: #4a4f50; }

/* document area */
.work { height: 669px; display: flex; flex: none; }
.editor { width: 1381px; position: relative; }
.rulerrow { height: 24px; display: flex; }
.corner { width: 8px; height: 7px; margin: 9px 0 0 8px; }
.ruler { width: 716px; height: 24px; margin-left: 317px; }
.rn { font: 9.500px "Noto Sans", sans-serif; fill: #444; text-anchor: middle; }
.rn text { transform: translateY(144px); }
.canvas { height: 645px; overflow: hidden; padding-left: 332px; }
.page { width: 717px; height: 660px; background: #fff; border-left: 1px solid #b4b4b4; border-right: 1px solid #b4b4b4; box-shadow: 0 0 6px rgba(0, 0, 0, .35); padding-left: 86px; color: #000; font: 13px/16px "DejaVu Sans", sans-serif; letter-spacing: .12px; margin-top: -7px; }
.page p { margin: 0; height: 25.650px; padding-top: .6px; }
.page p.two { height: 41.650px; }
.page u { text-decoration: none; padding-bottom: 1px; background: url("data:image/svg+xml,%3Csvg xmlns='http://www.w3.org/2000/svg' width='4' height='3'%3E%3Cpath d='M-1 -.5L0 .5 2 2.500 4 .5 5 -.5' fill='none' stroke='%23f00' stroke-width='1.100'/%3E%3C/svg%3E") 0 100% repeat-x; }
.page p.dl { padding: 0 0 0 1px; font-family: "DejaVu Sans Condensed", "DejaVu Sans", sans-serif; font-weight: 700; font-style: italic; letter-spacing: .17px; }
.dash { margin-right: 4px; letter-spacing: .13px; }
.page p.last { margin: -.7px 0 .7px; padding-left: 0; }
.sel { padding-left: 1px; outline: 1px solid #92b372; background: rgba(146, 179, 114, .28); outline-offset: -1px; }
.page h2 { margin: 54px 0 0; font: 700 14.500px/18.300px "DejaVu Sans", sans-serif; letter-spacing: -.065px; }
.h4 { letter-spacing: -.15px; }

.mark { position: absolute; border: 5px solid #c00; background: rgba(255, 255, 0, .5); }
.markdoc { left: 409px; top: 300px; width: 564px; height: 153px; }

.scroll { width: 12px; background: #fcfcfc; padding: 40px 3px 0; }
.scroll i { display: block; width: 6px; height: 34px; border-radius: 3px; background: #a0a0a0; }
.split { width: 7px; border: 1px solid #aaa; border-bottom: 0; display: flex; flex-direction: column; justify-content: flex-end; }
.split span { height: 371px; margin: 0 -1px; background: #2d2d2d; padding: 32px 0 0 1px; }
.split svg { width: 5px; height: 8px; }
.side { width: 40px; border-top: 1px solid #aaa; padding-left: 4px; }
.side .i { margin-left: 4px; }
.side hr { width: 22px; margin: 5px 0 3px 5px; border: 0; border-top: 1px solid #d5d5d5; }
.side .s1 { margin-top: 9px; }
.sbtn { display: flex; width: 32px; height: 32px; border: 1px solid #bcbcbc; border-radius: 3px; align-items: center; }
.side .sbtn .i { margin-left: 3px; }
.side .s2 { margin-top: 7px; } .side .s3 { margin-top: 13px; } .side .s4 { margin-top: 8px; } .side .s5 { margin-top: 12px; }

/* find bar and status bar */
.findbar { height: 39px; display: flex; align-items: center; flex: none; padding-bottom: 1px; }
.check { width: 14px; height: 14px; margin: 0 7px 0 10px; background: #fff; border: 1px solid #ccc; border-radius: 2px; }
.f1 { letter-spacing: -.23px; }
.f2 { width: 41px; margin-left: 8px; letter-spacing: -.57px; }
.f3 { width: 67px; letter-spacing: -.35px; }
.f4 { letter-spacing: -.12px; }

.status { height: 21px; border-top: 1px solid #b0b0b0; display: flex; flex: none; font-size: 12.500px; line-height: 20px; }
.status > span { border-right: 1px solid #222; height: 17px; margin-top: 2px; display: flex; align-items: center; padding-left: 9px; }
.status > .w284, .status > .w151 { padding-left: 8px; }
.w150 { width: 150px; } .w284 { width: 284px; } .w151 { width: 151px; } .w192 { width: 192px; } .w68 { width: 68px; } .w29 { width: 29px; }
.status > .w192 { justify-content: center; padding: 0 0 0 3px; }
.s-1 { letter-spacing: -.3px; } .s-2 { letter-spacing: -.314px; } .s-3 { letter-spacing: -.17px; } .s-4 { letter-spacing: -.4px; }
.status svg { width: 14px; height: 12px; }

/* desktop panel */
.panel { height: 41px; background: #2d2d2d; display: flex; flex: none; }
.app { width: 40px; margin-right: 6px; height: 41px; }
.app svg { width: 40px; height: 40px; }
.app.a2 { margin: 0 6px 0 -2px; } .app.a3 { margin-left: 2px; }
.run { background: linear-gradient(#92b372, #92b372) 0 100% / 100% 2px no-repeat; }
.on { background-color: #707070; }
.term { font: 700 9px "DejaVu Sans Mono", monospace; fill: #fff; }
.bdg { font: 700 10px "Noto Sans", sans-serif; fill: #fff; text-anchor: middle; }
.tray { margin-left: auto; display: flex; align-items: center; gap: 7px; padding: 1px 3px 0 0; }
.tray svg { width: 20px; height: 20px; }
.clock { width: 162px; background: #92b372; color: #fff; font-weight: 700; display: flex; align-items: center; justify-content: center; padding-top: 3px; }
.ck { letter-spacing: -.12px; }

/* calendar popup */
.cal { position: absolute; left: 1161px; top: 490px; width: 279px; height: 369px; background: #2f2f2f; border: 1px solid #1c1c1c; border-radius: 3px 3px 0 0; color: #dcdcdc; padding: 0 23px; }
.cal h3 { margin: 20px 0 0; font-size: 14px; line-height: 18px; text-align: center; color: #fff; }
.ca { letter-spacing: .4px; }
.nav { display: flex; align-items: center; height: 20px; margin: 16px 0 0; padding-left: 5px; color: #fff; }
.nav svg { width: 6px; height: 8px; fill: none; stroke: #bbb; stroke-width: 1.300; overflow: visible; }
.nav b { text-align: center; }
.cm { letter-spacing: -.1px; }
.cy { letter-spacing: .4px; }
.n1 { width: 110px; padding-left: 1px; } .n2 { margin-left: 11px; } .n3 { width: 76px; }
.grid { display: grid; grid-template-columns: repeat(7, 33px); width: 231px; }
.grid > * { display: flex; align-items: center; justify-content: center; }
.wk { height: 20px; margin-top: 20px; color: #c4c4c4; font-size: 14px; }
.days { grid-auto-rows: 31px; margin: 12px 0 0 -.5px; letter-spacing: .2px; }
.days b { color: #fff; }
.days .off { color: #6a6a6a; }
.days .today { background: #92b372; border-radius: 50%; }
.cal hr { margin: 11px 0 0; border: 0; border-top: 1px solid #1a1a1a; }
.set { margin-top: 10px; color: #e4e4e4; }
.cs { letter-spacing: -.12px; }
.m21 { left: 215px; top: 185px; width: 45px; height: 40px; }
.m22 { left: 14px; top: 214px; width: 50px; height: 44px; }
```
